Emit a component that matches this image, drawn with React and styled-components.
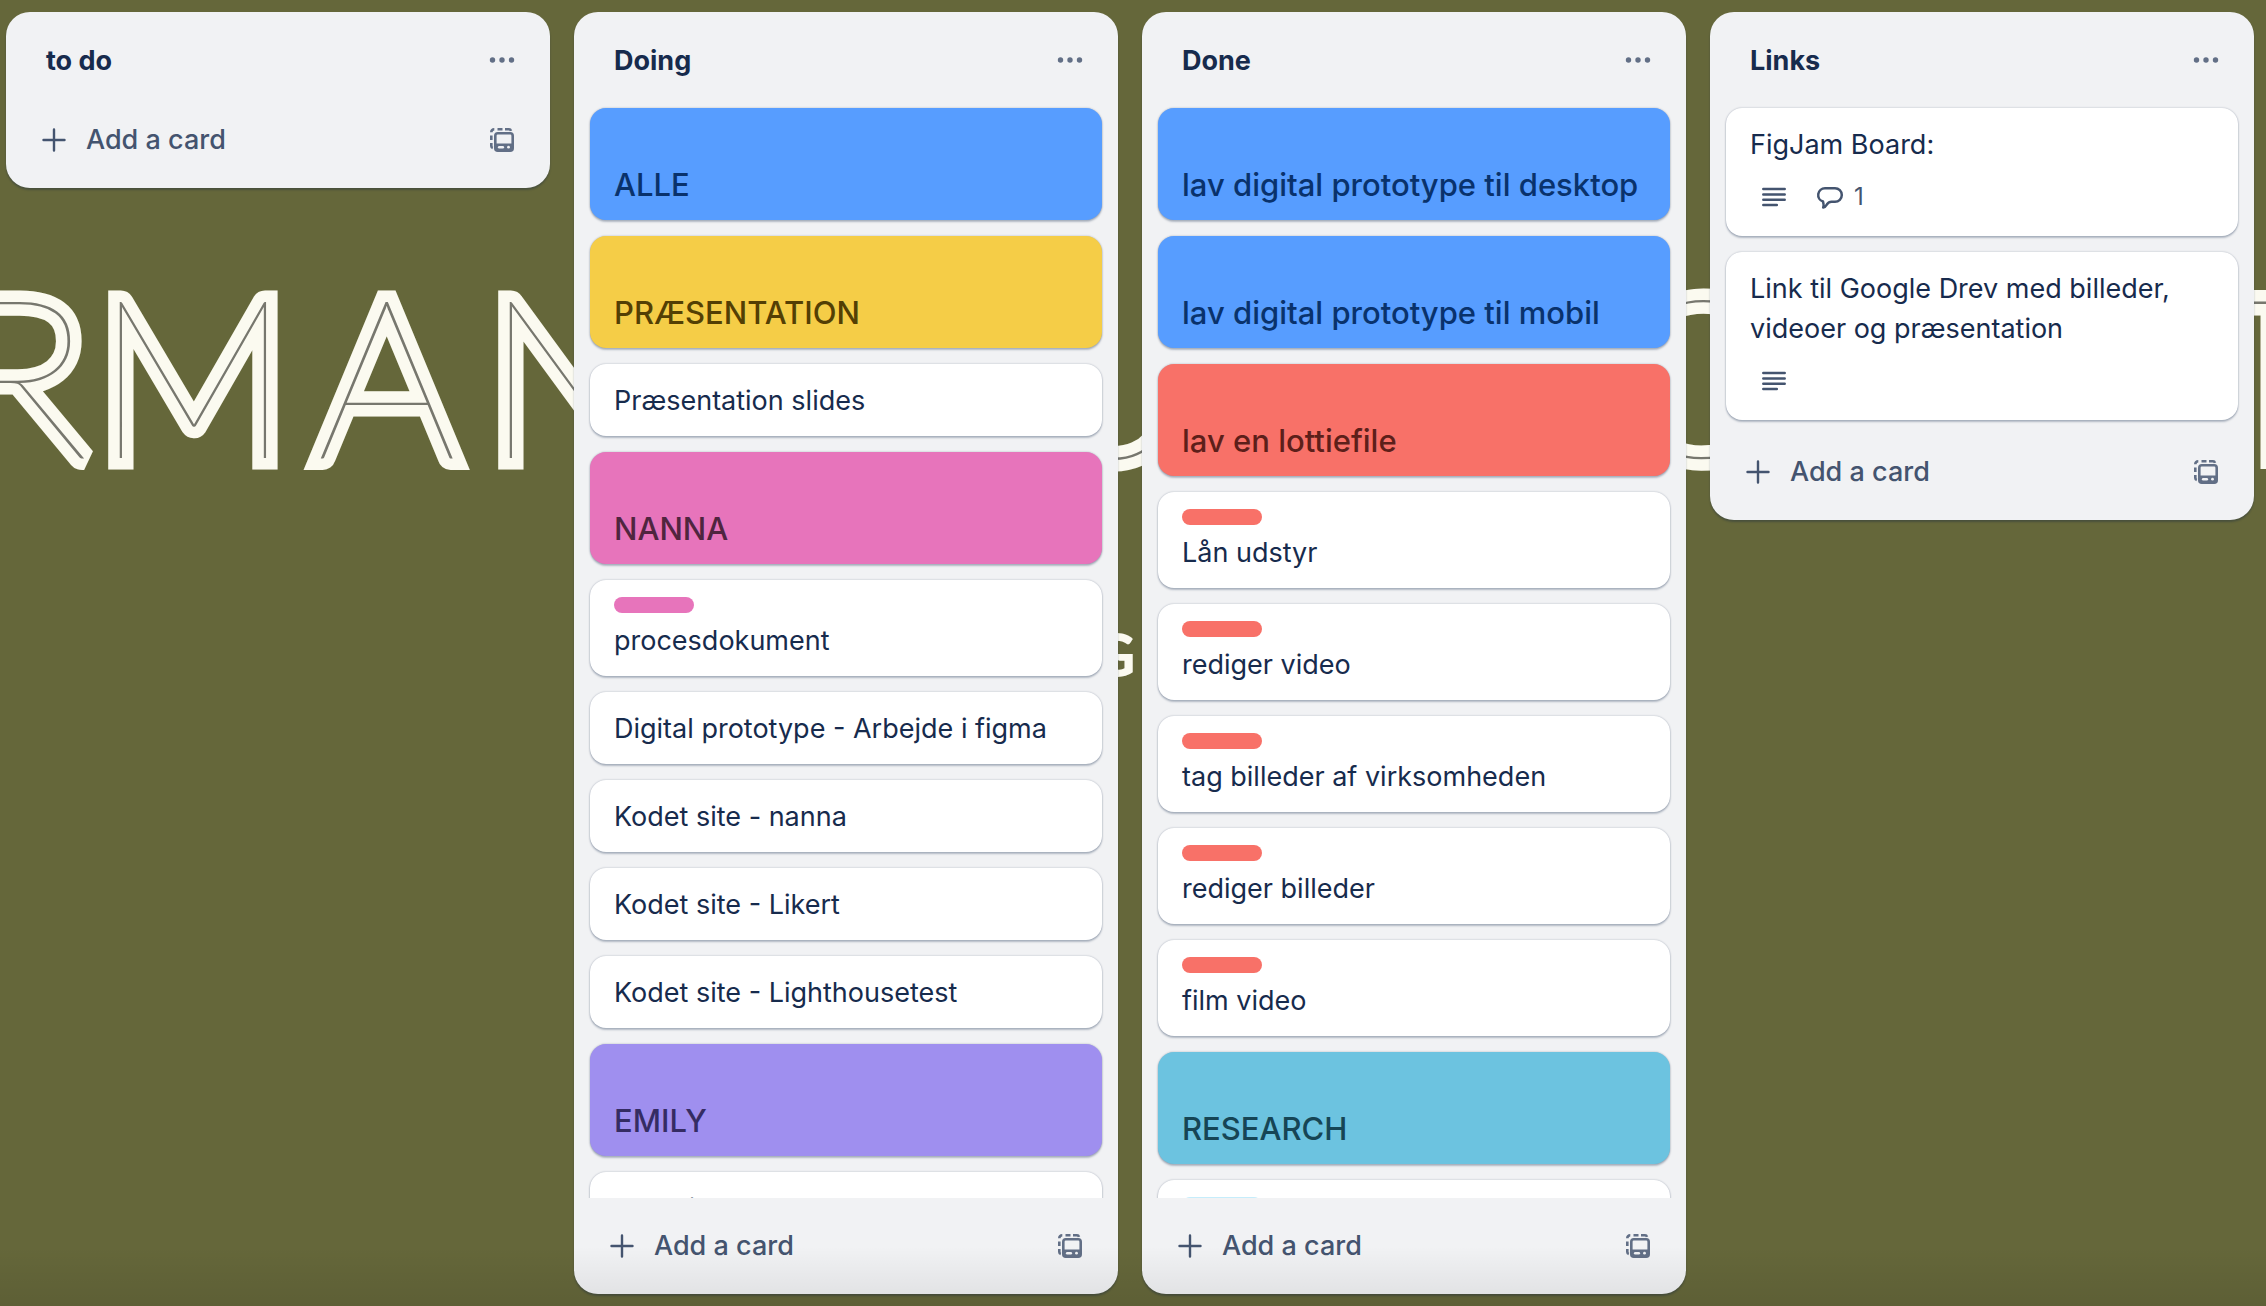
import React from "react";
import styled, { createGlobalStyle } from "styled-components";

const GlobalStyle = createGlobalStyle`
  * { box-sizing: border-box; }
  html, body, #root { height: 100%; }
  body {
    margin: 0;
    background: #65673a;
    font-family: Inter, "Liberation Sans", sans-serif;
    font-size: 27px;
    line-height: 40px;
    color: #172b4d;
    overflow: hidden;
  }
`;

const Page = styled.main`
  position: relative;
  height: 100%;
  overflow: hidden;
`;

const Wallpaper = styled.svg`
  position: absolute;
  inset: 0;
  width: 100%;
  height: 100%;
`;

const Inline = styled.text`
  font-family: Lato, sans-serif;
  font-weight: 100;
  font-size: 222px;
  fill: #77776e;
  stroke: #fbfaf0;
  stroke-width: 23px;
  stroke-miterlimit: 2;
  paint-order: stroke;
`;

const Tagline = styled.text`
  font-family: Lato, sans-serif;
  font-weight: 900;
  font-size: 60px;
  fill: #fbfaf0;
`;

const BottomShade = styled.div`
  position: absolute;
  inset: auto 0 0;
  height: 60px;
  background: linear-gradient(rgba(0, 0, 0, 0), rgba(0, 0, 0, 0.08));
  pointer-events: none;
`;

const Board = styled.div`
  position: relative;
  display: flex;
  align-items: flex-start;
  gap: 24px;
  height: 100%;
  padding: 12px 12px 12px 6px;
`;

const Column = styled.section`
  flex: 1 1 0;
  min-width: 0;
  max-height: 100%;
  display: flex;
  flex-direction: column;
  background: #f1f2f4;
  border-radius: 24px;
  box-shadow: 0 2px 2px rgba(9, 30, 66, 0.3);
`;

const ColumnHeader = styled.header`
  flex: none;
  display: flex;
  align-items: center;
  justify-content: space-between;
  height: 80px;
  padding: 16px 16px 0 40px;
`;

const Title = styled.h2`
  margin: 0;
  padding-top: 2px;
  font-size: 27px;
  font-weight: 700;
  line-height: 38px;
`;

const IconButton = styled.button`
  display: grid;
  place-items: center;
  width: 64px;
  height: 64px;
  padding: 0;
  border: 0;
  border-radius: 16px;
  background: none;
  color: #626f86;
`;

const CardList = styled.ol`
  flex: 0 1 auto;
  min-height: 0;
  display: flex;
  flex-direction: column;
  gap: 16px;
  margin: 0;
  padding: 16px 16px 4px;
  list-style: none;
  overflow: hidden;
`;

const Card = styled.li`
  flex: none;
  display: flex;
  flex-direction: column;
  gap: 8px;
  padding: 17px 24px 15px;
  border-radius: 16px;
  background: #fff;
  box-shadow: 0 2px 2px rgba(9, 30, 66, 0.25), 0 0 2px rgba(9, 30, 66, 0.31);
`;

const CoverCard = styled(Card)`
  justify-content: flex-end;
  height: 112px;
  background: ${(p) => p.$bg};
  color: ${(p) => p.$ink};
  font-size: 31px;
  font-weight: 500;
`;

const Label = styled.span`
  width: 80px;
  height: 16px;
  border-radius: 8px;
  background: ${(p) => p.$bg};
`;

const CardLink = styled.a`
  color: inherit;
  text-decoration: none;
`;

const Badges = styled.div`
  display: flex;
  align-items: center;
  gap: 16px;
  height: 48px;
  padding-left: 4px;
  color: #44546f;
  font-size: 24px;
`;

const Badge = styled.span`
  display: flex;
  align-items: center;
  gap: 8px;
  padding: 0 4px;
`;

const Footer = styled.footer`
  flex: none;
  display: flex;
  align-items: center;
  justify-content: space-between;
  height: 96px;
  padding: 0 16px;
`;

const AddButton = styled.button`
  display: flex;
  align-items: center;
  gap: 16px;
  height: 64px;
  padding: 0 16px;
  border: 0;
  border-radius: 16px;
  background: none;
  color: #44546f;
  font: inherit;
  font-weight: 500;
`;

const MoreIcon = () => (
  <svg width="32" height="32" viewBox="0 0 32 32" fill="currentColor" aria-hidden="true">
    <circle cx="6.5" cy="16" r="2.7" />
    <circle cx="16" cy="16" r="2.7" />
    <circle cx="25.5" cy="16" r="2.7" />
  </svg>
);

const PlusIcon = () => (
  <svg width="32" height="32" viewBox="0 0 32 32" fill="none" stroke="currentColor" strokeWidth="2.4" strokeLinecap="round" aria-hidden="true">
    <path d="M16 5.5v21M5.5 16h21" />
  </svg>
);

const TemplateIcon = () => (
  <svg width="32" height="32" viewBox="0 0 32 32" fill="none" stroke="currentColor" strokeWidth="2.6" aria-hidden="true">
    <path d="M5.300 8.300q0-3 3-3M11.500 5.300h5M19 5.300h4q1.500 0 2 1.500M5.300 11.500v4.500M5.300 19v3q0 1.500 1.500 2" />
    <rect x="9.300" y="9.300" width="17.400" height="17.400" rx="2.500" />
    <path d="M9.300 19.500h17.400v5.500a2 2 0 0 1-2 2H11.300a2 2 0 0 1-2-2z" fill="currentColor" stroke="none" />
    <path d="M13.200 23.200h3.600" stroke="#f1f2f4" strokeLinecap="round" />
    <circle cx="22.500" cy="23.200" r="1.400" fill="#f1f2f4" stroke="none" />
  </svg>
);

const DescriptionIcon = () => (
  <svg width="32" height="32" viewBox="0 0 32 32" fill="none" stroke="currentColor" strokeWidth="2.5" strokeLinecap="round" aria-hidden="true">
    <path d="M5.300 8h21.400M5.300 13.400h21.400M5.300 18.700h21.400M5.300 24h13.500" />
  </svg>
);

const CommentIcon = () => (
  <svg width="32" height="32" viewBox="0 0 32 32" fill="none" stroke="currentColor" strokeWidth="2.5" strokeLinejoin="round" aria-hidden="true">
    <path d="M11 7.200h10a6.800 6.800 0 0 1 0 13.600h-3.500c-2 0-3.500 1-4.500 2.500-1 1.700-2.300 2.900-3.800 3.200q.9-3-.2-6A6.800 6.800 0 0 1 11 7.200z" />
  </svg>
);

const BLUE = { bg: "#579dff", ink: "#09326c" };
const YELLOW = { bg: "#f5cd47", ink: "#533f04" };
const PINK = { bg: "#e774bb", ink: "#50253f" };
const PURPLE = { bg: "#9f8fef", ink: "#352c63" };
const RED = { bg: "#f87168", ink: "#5d1f1a" };
const SKY = { bg: "#6cc3e0", ink: "#164555" };
const LIGHT_SKY = "#c6edfb";

const columns = [
  { title: "to do", cards: [] },
  {
    title: "Doing",
    cards: [
      { text: "ALLE", cover: BLUE },
      { text: "PRÆSENTATION", cover: YELLOW },
      { text: "Præsentation slides" },
      { text: "NANNA", cover: PINK },
      { text: "procesdokument", label: PINK.bg },
      { text: "Digital prototype - Arbejde i figma" },
      { text: "Kodet site - nanna" },
      { text: "Kodet site - Likert" },
      { text: "Kodet site - Lighthousetest" },
      { text: "EMILY", cover: PURPLE },
      { text: "Copy i app" },
    ],
  },
  {
    title: "Done",
    cards: [
      { text: "lav digital prototype til desktop", cover: BLUE },
      { text: "lav digital prototype til mobil", cover: BLUE },
      { text: "lav en lottiefile", cover: RED },
      { text: "Lån udstyr", label: RED.bg },
      { text: "rediger video", label: RED.bg },
      { text: "tag billeder af virksomheden", label: RED.bg },
      { text: "rediger billeder", label: RED.bg },
      { text: "film video", label: RED.bg },
      { text: "RESEARCH", cover: SKY },
      { text: "", label: LIGHT_SKY },
    ],
  },
  {
    title: "Links",
    cards: [
      { text: "FigJam Board:", description: true, comments: 1 },
      { text: "Link til Google Drev med billeder, videoer og præsentation", description: true },
    ],
  },
];

function BoardCard({ card }) {
  if (card.cover) {
    return (
      <CoverCard $bg={card.cover.bg} $ink={card.cover.ink}>
        <CardLink href="#">{card.text}</CardLink>
      </CoverCard>
    );
  }
  return (
    <Card>
      {card.label && <Label $bg={card.label} />}
      <CardLink href="#">{card.text}</CardLink>
      {card.description && (
        <Badges>
          <Badge><DescriptionIcon /></Badge>
          {card.comments && <Badge><CommentIcon />{card.comments}</Badge>}
        </Badges>
      )}
    </Card>
  );
}

export default function App() {
  return (
    <Page>
      <GlobalStyle />
      <Wallpaper aria-hidden="true">
        <Inline x="-42 94 316 484 1034 1614 2210" y="458">RMANUCT</Inline>
        <Tagline x="1092" y="677">G</Tagline>
      </Wallpaper>
      <Board>
        {columns.map((column) => (
          <Column key={column.title}>
            <ColumnHeader>
              <Title>{column.title}</Title>
              <IconButton aria-label="List actions"><MoreIcon /></IconButton>
            </ColumnHeader>
            {column.cards.length > 0 && (
              <CardList>
                {column.cards.map((card, i) => <BoardCard key={i} card={card} />)}
              </CardList>
            )}
            <Footer>
              <AddButton><PlusIcon />Add a card</AddButton>
              <IconButton aria-label="Create from template"><TemplateIcon /></IconButton>
            </Footer>
          </Column>
        ))}
      </Board>
      <BottomShade />
    </Page>
  );
}
